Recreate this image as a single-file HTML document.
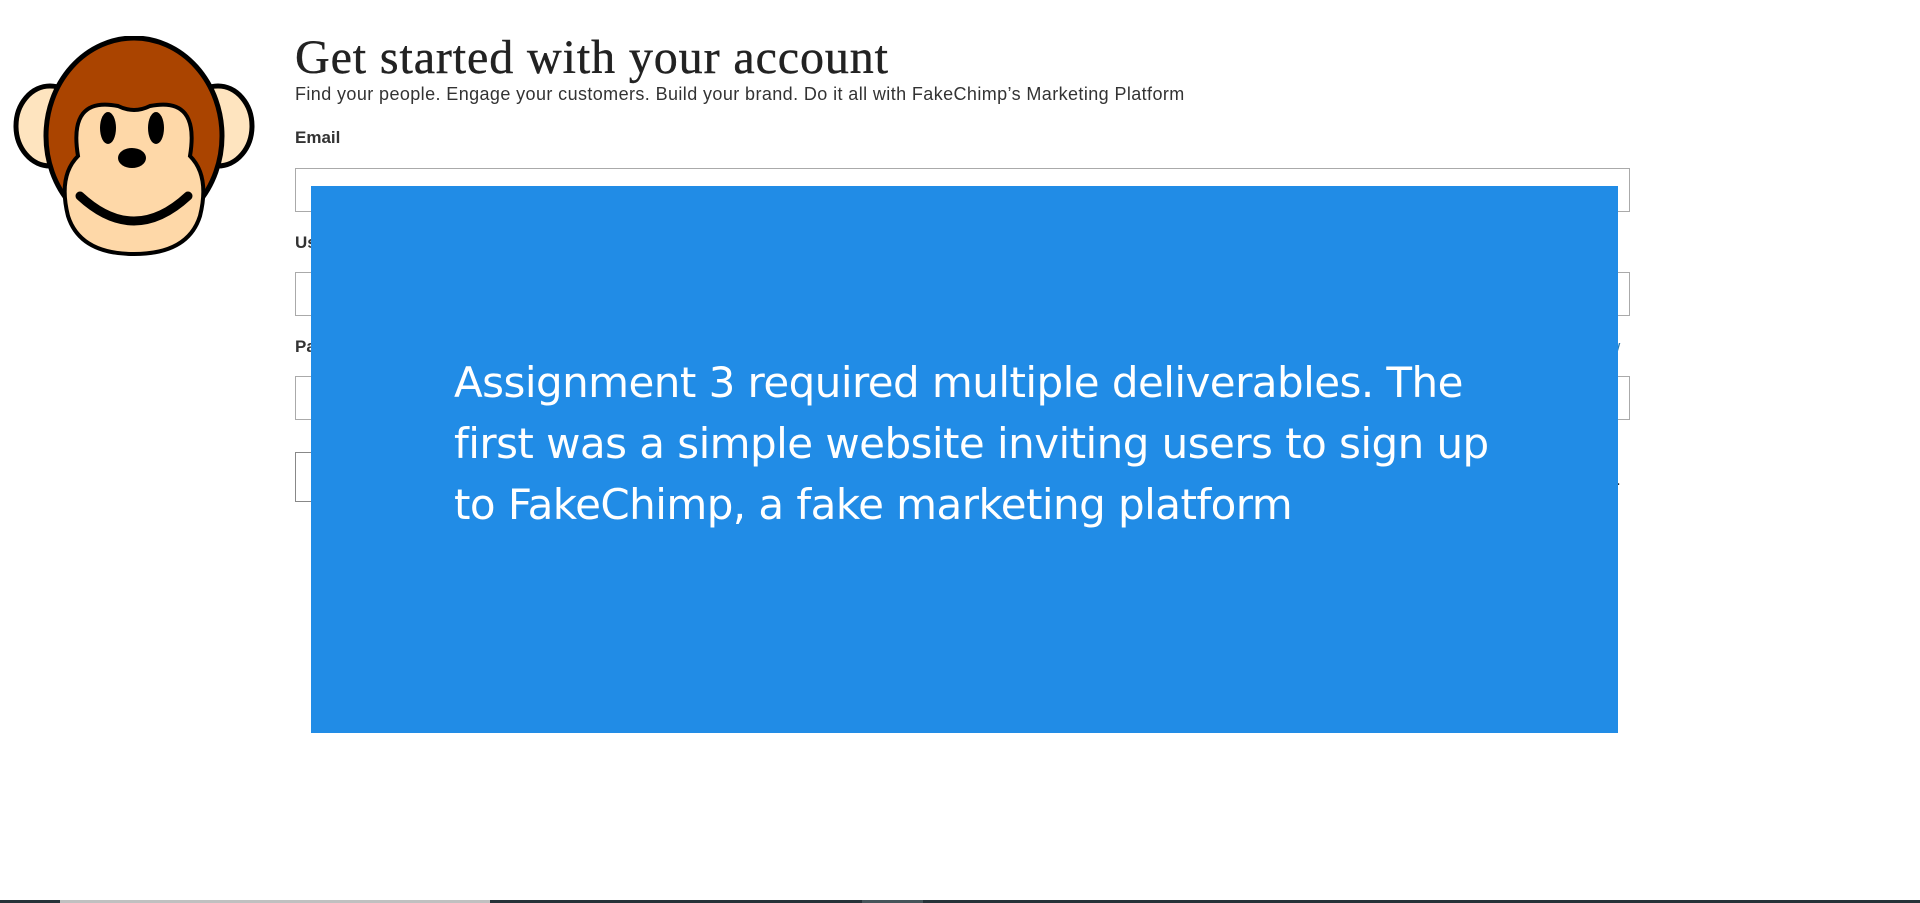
<!DOCTYPE html>
<html><head><meta charset="utf-8"><style>
html,body{margin:0;padding:0;width:1920px;height:903px;overflow:hidden;background:#fff;position:relative;font-family:"Liberation Sans",sans-serif;}
.a{position:absolute}
h1{position:absolute;left:295px;top:30px;margin:0;font-family:"Liberation Serif",serif;font-weight:normal;font-size:48px;color:#222;letter-spacing:0.9px;-webkit-text-stroke:0.4px #222}
.sub{left:295px;top:84px;font-size:18px;color:#333;letter-spacing:0.4px}
.lbl{left:295px;font-size:17px;font-weight:bold;color:#333}
.inp{left:295px;width:1333px;height:42px;border:1px solid #aaa;background:#fff}
.blue{left:311px;top:186px;width:1307px;height:547px;background:#218ce6}
.txt{left:454px;top:352px;white-space:nowrap;font-family:"DejaVu Sans",sans-serif;font-size:42px;line-height:61px;color:#fff;letter-spacing:-0.55px}
</style></head><body>
<svg class="a" style="left:8px;top:36px" width="252" height="224" viewBox="0 0 252 224">
<ellipse cx="42" cy="90" rx="34" ry="40" fill="#fee4bf" stroke="#000" stroke-width="5"/>
<ellipse cx="210" cy="90" rx="34" ry="40" fill="#fee4bf" stroke="#000" stroke-width="5"/>
<ellipse cx="126" cy="100" rx="88" ry="98" fill="#aa4400" stroke="#000" stroke-width="5"/>
<path d="M60 180 Q50 140 70 120 Q60 60 110 70 Q126 78 142 70 Q192 60 182 120 Q202 140 192 180 Q180 218 126 218 Q72 218 60 180Z" fill="#fed8a8" stroke="#000" stroke-width="4"/>
<ellipse cx="100" cy="92" rx="8" ry="16" fill="#000"/>
<ellipse cx="148" cy="92" rx="8" ry="16" fill="#000"/>
<ellipse cx="124" cy="122" rx="14" ry="10" fill="#000"/>
<path d="M72 160 Q126 210 180 160" fill="none" stroke="#000" stroke-width="9" stroke-linecap="round"/>
</svg>
<h1>Get started with your account</h1>
<div class="a sub">Find your people. Engage your customers. Build your brand. Do it all with FakeChimp’s Marketing Platform</div>
<div class="a lbl" style="top:128px">Email</div>
<div class="a inp" style="top:168px"></div>
<div class="a lbl" style="top:233px">Username</div>
<div class="a inp" style="top:272px"></div>
<div class="a lbl" style="top:337px">Password</div>
<div class="a" style="left:1608px;top:337px;font-size:17px;color:#2a7ab0">w</div>
<div class="a inp" style="top:376px"></div>
<div class="a" style="left:295px;top:452px;width:60px;height:48px;border:1px solid #888"></div>
<div class="a" style="left:1616px;top:470px;font-size:17px;color:#333">.</div>
<div class="a blue"></div>
<div class="a txt">Assignment 3 required multiple deliverables. The<br>first was a simple website inviting users to sign up<br>to FakeChimp, a fake marketing platform</div>
<div class="a" style="left:0;top:900px;width:1920px;height:3px;background:#263238"></div>
<div class="a" style="left:60px;top:900px;width:430px;height:3px;background:#c0c0c0"></div>
<div class="a" style="left:862px;top:900px;width:61px;height:3px;background:#46555a"></div>
</body></html>
